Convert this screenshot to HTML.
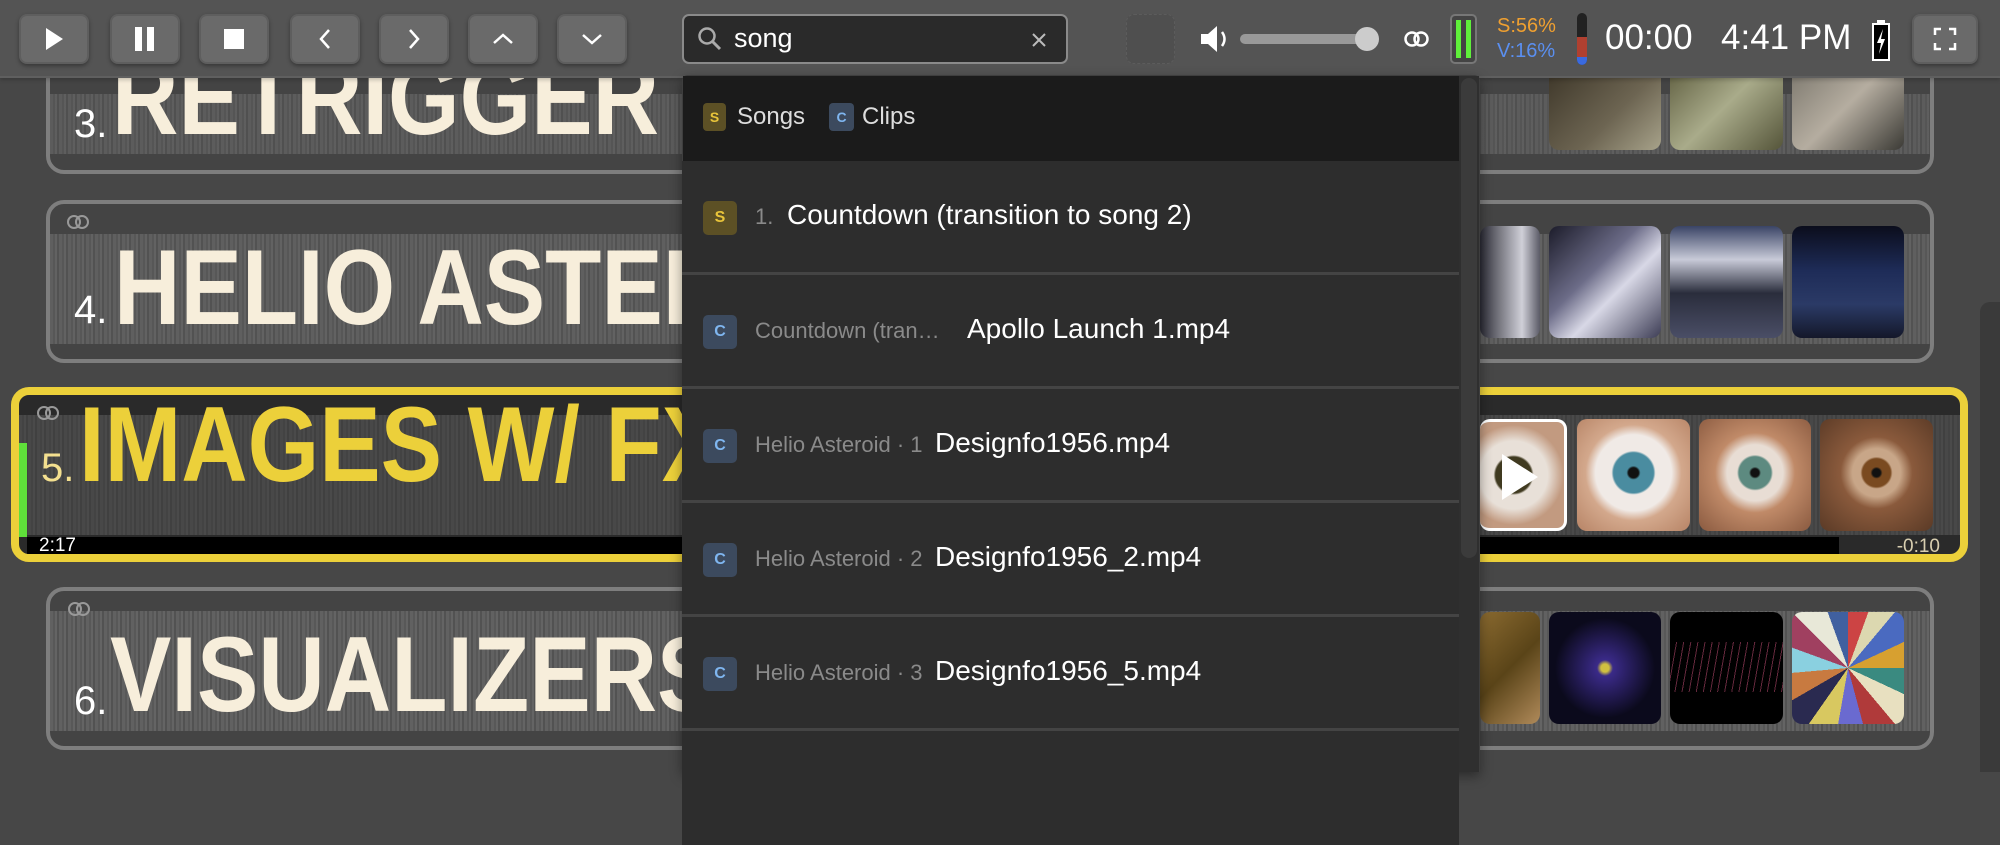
<!DOCTYPE html>
<html><head><meta charset="utf-8">
<style>
*{box-sizing:border-box;margin:0;padding:0}
body{width:2000px;height:772px;background:#474747;position:relative;overflow:hidden;font-family:"Liberation Sans",sans-serif}
.abs{position:absolute}
.row{position:absolute;border:4px solid #7e7e7e;border-radius:18px;background:#444;overflow:hidden}
.wave{position:absolute;left:0;right:0;background:repeating-linear-gradient(90deg,#666 0 3px,#5c5c5c 3px 5px,#6a6a6a 5px 7px,#555 7px 9px)}
.title{position:absolute;font-weight:bold;color:#f7eedb;font-size:107px;transform:scaleX(.86);transform-origin:left bottom;white-space:nowrap;line-height:1}
.num{position:absolute;color:#fff;font-size:40px;line-height:1}
.th{position:absolute;border-radius:10px;overflow:hidden}
.btn{position:absolute;top:14px;width:70px;height:50px;border-radius:8px;background:#6a6a6a;border:2px solid #5e5e5e;box-shadow:0 2px 4px rgba(0,0,0,.35);display:flex;align-items:center;justify-content:center}
.dd-row{position:absolute;left:682px;width:777px;height:114px;background:#2d2d2d;border-bottom:3px solid #444}
.badge{position:absolute;left:21px;top:40px;width:34px;height:34px;border-radius:5px;font-size:16px;font-weight:bold;display:flex;align-items:center;justify-content:center}
.bs{background:#5c5025;color:#e8c43a}
.bc{background:#3c4a5e;color:#7fb6f0}
.gray{position:absolute;top:43px;color:#8a8a8a;font-size:22px;white-space:nowrap}
.main{position:absolute;top:38px;color:#fff;font-size:28px;white-space:nowrap}
.icon{position:absolute;bottom:6px;right:6px;width:22px;height:22px}
</style></head><body>

<!-- Row 3 -->
<div class="row" style="left:46px;top:40px;width:1888px;height:134px">
  <div class="wave" style="top:50px;height:60px;opacity:.7"></div>
  <div class="num" style="left:24px;top:60px">3.</div>
  <div class="title" style="left:62px;top:0px">RETRIGGER</div>
</div>
<!-- Row 4 -->
<div class="row" style="left:46px;top:200px;width:1888px;height:163px">
  <div class="wave" style="top:30px;height:110px;opacity:.8"></div>
  <div class="abs" style="left:16px;top:10px;width:24px;height:14px"><svg width="26" height="16"><circle cx="8" cy="8" r="6" fill="none" stroke="#999" stroke-width="2"/><circle cx="16" cy="8" r="6" fill="none" stroke="#999" stroke-width="2"/></svg></div>
  <div class="num" style="left:24px;top:86px">4.</div>
  <div class="title" style="left:64px;top:30px">HELIO ASTEROID</div>
</div>
<!-- Row 5 selected -->
<div class="row" style="left:11px;top:387px;width:1957px;height:175px;border:8px solid #ecd03a;background:#2a2a2a">
  <div class="wave" style="top:20px;height:120px;opacity:.5"></div>
  <div class="abs" style="left:0;top:48px;width:8px;height:94px;background:#5fe03a"></div>
  <div class="abs" style="left:8px;top:142px;width:1812px;height:19px;background:#000"></div>
  <div class="abs" style="left:20px;top:140px;color:#fff;font-size:19px">2:17</div>
  <div class="abs" style="right:20px;top:141px;color:#d8ceb0;font-size:19px">-0:10</div>
  <div class="abs" style="left:17px;top:10px"><svg width="26" height="16"><circle cx="8" cy="8" r="6" fill="none" stroke="#999" stroke-width="2"/><circle cx="16" cy="8" r="6" fill="none" stroke="#999" stroke-width="2"/></svg></div>
  <div class="num" style="left:22px;top:53px;color:#f3df8f">5.</div>
  <div class="title" style="left:60px;top:-4px;color:#ecd03a">IMAGES W/ FX</div>
</div>
<!-- Row 6 -->
<div class="row" style="left:46px;top:587px;width:1888px;height:163px">
  <div class="wave" style="top:20px;height:120px;opacity:.85"></div>
  <div class="abs" style="left:17px;top:10px"><svg width="26" height="16"><circle cx="8" cy="8" r="6" fill="none" stroke="#999" stroke-width="2"/><circle cx="16" cy="8" r="6" fill="none" stroke="#999" stroke-width="2"/></svg></div>
  <div class="num" style="left:24px;top:90px">6.</div>
  <div class="title" style="left:60px;top:30px">VISUALIZERS</div>
</div>

<!-- thumbnails row3 -->
<div class="th" style="left:1549px;top:60px;width:112px;height:90px;background:linear-gradient(135deg,#3a3326,#6d6552 60%,#a7a28a)"></div>
<div class="th" style="left:1670px;top:60px;width:113px;height:90px;background:linear-gradient(135deg,#5b5a3c,#a9ab8a 50%,#55553a)"></div>
<div class="th" style="left:1792px;top:60px;width:112px;height:90px;background:linear-gradient(135deg,#78746a,#b5ada0 50%,#3b3a35)"></div>
<!-- row4 -->
<div class="th" style="left:1480px;top:226px;width:60px;height:112px;background:linear-gradient(90deg,#2b2b35,#d0d0d8 70%,#5a5a66)"></div>
<div class="th" style="left:1549px;top:226px;width:112px;height:112px;background:linear-gradient(135deg,#1c1c2a,#6c6c88 40%,#d8d8e6 60%,#3d3d55)"></div>
<div class="th" style="left:1670px;top:226px;width:113px;height:112px;background:linear-gradient(180deg,#3a4466,#c8cad8 30%,#2a2d3c 60%,#4a4e66)"></div>
<div class="th" style="left:1792px;top:226px;width:112px;height:112px;background:linear-gradient(180deg,#0b0d1c,#1e2c58 40%,#2b3a66 70%,#14182a)"></div>
<!-- row5 eyes -->
<div class="th" style="left:1480px;top:419px;width:87px;height:112px;border:3px solid #fff;border-left:none;background:radial-gradient(circle at 40% 50%,#403a20 0 18px,#e8e0d8 20px 34px,#c29a80 50px)"><svg class="abs" style="left:20px;top:30px" width="40" height="50"><path d="M2 2 L38 25 L2 48Z" fill="#fff"/></svg></div>
<div class="th" style="left:1577px;top:419px;width:113px;height:112px;background:radial-gradient(circle at 50% 48%,#111 0 5px,#4a8ca0 7px 20px,#f0eae6 22px 38px,#d3a88c 48px,#b78466)"></div>
<div class="th" style="left:1699px;top:419px;width:112px;height:112px;background:radial-gradient(circle at 50% 48%,#111 0 4px,#5d8a80 6px 16px,#e8ddd4 18px 28px,#c08a68 40px,#8a5a40)"></div>
<div class="th" style="left:1820px;top:419px;width:113px;height:112px;background:radial-gradient(circle at 50% 48%,#111 0 4px,#7a4a20 6px 14px,#c8a688 16px 24px,#8a5a3c 36px,#5a3a26)"></div>
<!-- row6 viz -->
<div class="th" style="left:1480px;top:612px;width:60px;height:112px;background:linear-gradient(135deg,#8a6a30,#5a4418 50%,#b08a5a)"></div>
<div class="th" style="left:1549px;top:612px;width:112px;height:112px;background:radial-gradient(circle at 50% 50%,#d0c040 0 4px,#3a2a88 8px,#0b0a1c 50px)"></div>
<div class="th" style="left:1670px;top:612px;width:113px;height:112px;background:#000"><div class="abs" style="left:0;top:30px;width:113px;height:50px;background:repeating-linear-gradient(100deg,transparent 0 6px,rgba(200,80,120,.5) 6px 7px)"></div></div>
<div class="th" style="left:1792px;top:612px;width:112px;height:112px;background:conic-gradient(#c44 0 20deg,#dcd8b0 20deg 40deg,#4a6ac0 40deg 65deg,#d7a030 65deg 90deg,#3a8a80 90deg 115deg,#e8e0c0 115deg 140deg,#b03a3a 140deg 165deg,#6a6ad0 165deg 190deg,#d8c860 190deg 215deg,#2a2a50 215deg 240deg,#c87a40 240deg 265deg,#8ad0e0 265deg 290deg,#a04060 290deg 315deg,#e8e8d8 315deg 340deg,#4060a0 340deg 360deg)"></div>

<!-- right page scrollbar -->
<div class="abs" style="left:1980px;top:302px;width:20px;height:470px;background:#3a3a3a;border-radius:10px 0 0 0"></div>

<!-- toolbar -->
<div class="abs" style="left:0;top:0;width:2000px;height:78px;background:#545454;border-bottom:2px solid #5f5f5f;box-shadow:0 2px 4px rgba(0,0,0,.2)"></div>
<div class="btn" style="left:19px"><svg width="20" height="24"><path d="M2 1 L19 12 L2 23Z" fill="#fff"/></svg></div>
<div class="btn" style="left:110px"><svg width="24" height="26"><rect x="2" y="1" width="7" height="24" fill="#fff"/><rect x="14" y="1" width="7" height="24" fill="#fff"/></svg></div>
<div class="btn" style="left:199px"><svg width="22" height="22"><rect x="1" y="1" width="20" height="20" fill="#fff"/></svg></div>
<div class="btn" style="left:290px"><svg width="14" height="22"><path d="M11 2 L3 11 L11 20" fill="none" stroke="#fff" stroke-width="2.5"/></svg></div>
<div class="btn" style="left:379px"><svg width="14" height="22"><path d="M3 2 L11 11 L3 20" fill="none" stroke="#fff" stroke-width="2.5"/></svg></div>
<div class="btn" style="left:468px"><svg width="22" height="14"><path d="M2 11 L11 3 L20 11" fill="none" stroke="#fff" stroke-width="2.5"/></svg></div>
<div class="btn" style="left:557px"><svg width="22" height="14"><path d="M2 3 L11 11 L20 3" fill="none" stroke="#fff" stroke-width="2.5"/></svg></div>

<!-- search -->
<div class="abs" style="left:682px;top:14px;width:386px;height:50px;border:2px solid #8a8a8a;border-radius:7px;background:#2a2a2a"></div>
<svg class="abs" style="left:697px;top:26px" width="26" height="26"><circle cx="10" cy="10" r="7.5" fill="none" stroke="#aaa" stroke-width="2.5"/><path d="M15.5 15.5 L23 23" stroke="#aaa" stroke-width="3"/></svg>
<div class="abs" style="left:734px;top:23px;color:#fff;font-size:27px">song</div>
<svg class="abs" style="left:1031px;top:32px" width="16" height="16"><path d="M2 2 L14 14 M14 2 L2 14" stroke="#bbb" stroke-width="2"/></svg>

<div class="abs" style="left:1126px;top:14px;width:49px;height:50px;border-radius:8px;background:#4f4f4f;border:1px dashed #5c5c5c"></div>
<svg class="abs" style="left:1199px;top:24px" width="34" height="30"><path d="M2 10 H9 L18 2 V28 L9 20 H2Z" fill="#fff"/><path d="M23 8 Q28 15 23 22" fill="none" stroke="#fff" stroke-width="2.5"/></svg>
<div class="abs" style="left:1240px;top:34px;width:130px;height:10px;border-radius:5px;background:#999"></div>
<div class="abs" style="left:1355px;top:27px;width:24px;height:24px;border-radius:12px;background:#ccc"></div>
<svg class="abs" style="left:1403px;top:29px" width="28" height="20"><circle cx="9" cy="10" r="6.5" fill="none" stroke="#fff" stroke-width="2.5"/><circle cx="18" cy="10" r="6.5" fill="none" stroke="#fff" stroke-width="2.5"/></svg>
<div class="abs" style="left:1450px;top:14px;width:27px;height:50px;border-radius:5px;border:2px solid #777;background:#444"></div>
<div class="abs" style="left:1456px;top:20px;width:5px;height:38px;background:#5ff03a"></div>
<div class="abs" style="left:1466px;top:20px;width:5px;height:38px;background:#5ff03a"></div>
<div class="abs" style="left:1497px;top:15px;color:#f0a030;font-size:20px">S:56%</div>
<div class="abs" style="left:1497px;top:40px;color:#5a8ff0;font-size:20px">V:16%</div>
<div class="abs" style="left:1577px;top:13px;width:10px;height:52px;border-radius:5px;background:#222;overflow:hidden"><div style="position:absolute;top:24px;width:10px;height:20px;background:#b04030"></div><div style="position:absolute;top:44px;width:10px;height:8px;background:#3a6ae0"></div></div>
<div class="abs" style="left:1605px;top:18px;color:#fff;font-size:35px">00:00</div>
<div class="abs" style="left:1721px;top:18px;color:#fff;font-size:35px">4:41 PM</div>
<svg class="abs" style="left:1871px;top:19px" width="22" height="42"><rect x="6" y="1" width="8" height="4" fill="#fff"/><rect x="2" y="5" width="16" height="36" fill="#000" stroke="#fff" stroke-width="2"/><path d="M12 10 L6 24 H10 L8 35 L14 20 H10Z" fill="#fff"/></svg>
<div class="btn" style="left:1912px;width:66px"><svg width="24" height="24"><path d="M2 8 V2 H8 M16 2 H22 V8 M22 16 V22 H16 M8 22 H2 V16" fill="none" stroke="#fff" stroke-width="2.5"/></svg></div>

<!-- dropdown -->
<div class="abs" style="left:682px;top:75px;width:798px;height:697px;background:#2d2d2d;border:1px solid #3e3e3e;border-radius:6px 6px 0 0;box-shadow:0 4px 12px rgba(0,0,0,.4)"></div>
<div class="abs" style="left:1459px;top:76px;width:20px;height:696px;background:#2f2f2f"></div>
<div class="abs" style="left:1461px;top:78px;width:16px;height:480px;border-radius:8px;background:#3b3b3b"></div>
<div class="abs" style="left:683px;top:76px;width:776px;height:85px;background:#1b1b1b"></div>
<div class="abs" style="left:703px;top:103px;width:23px;height:28px;border-radius:4px;background:#5c5025;color:#e8c43a;font-size:14px;font-weight:bold;text-align:center;line-height:28px">S</div>
<div class="abs" style="left:737px;top:103px;color:#ddd;font-size:24px">Songs</div>
<div class="abs" style="left:829px;top:103px;width:25px;height:28px;border-radius:4px;background:#3c4a5e;color:#7fb6f0;font-size:14px;font-weight:bold;text-align:center;line-height:28px">C</div>
<div class="abs" style="left:862px;top:103px;color:#ddd;font-size:24px">Clips</div>

<div class="dd-row" style="top:161px"><div class="badge bs">S</div><div class="gray" style="left:73px">1.</div><div class="main" style="left:105px">Countdown (transition to song 2)</div></div>
<div class="dd-row" style="top:275px"><div class="badge bc">C</div><div class="gray" style="left:73px">Countdown (tran…</div><div class="main" style="left:285px">Apollo Launch 1.mp4</div></div>
<div class="dd-row" style="top:389px"><div class="badge bc">C</div><div class="gray" style="left:73px">Helio Asteroid · 1</div><div class="main" style="left:253px">Designfo1956.mp4</div></div>
<div class="dd-row" style="top:503px"><div class="badge bc">C</div><div class="gray" style="left:73px">Helio Asteroid · 2</div><div class="main" style="left:253px">Designfo1956_2.mp4</div></div>
<div class="dd-row" style="top:617px"><div class="badge bc">C</div><div class="gray" style="left:73px">Helio Asteroid · 3</div><div class="main" style="left:253px">Designfo1956_5.mp4</div></div>
<div class="dd-row" style="top:731px;border-bottom:none"></div>
</body></html>
